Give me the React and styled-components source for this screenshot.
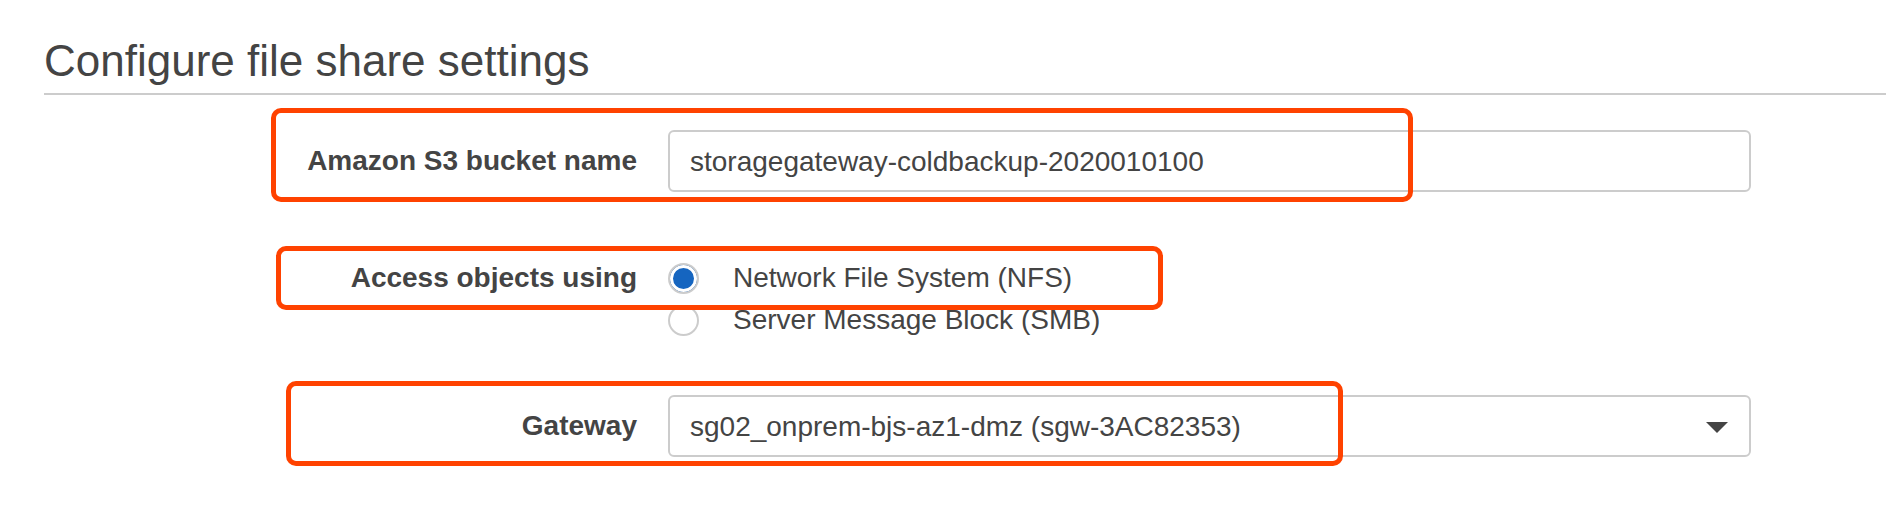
import React from "react";
import styled, { createGlobalStyle } from "styled-components";

const GlobalStyle = createGlobalStyle`
  html, body {
    margin: 0;
    padding: 0;
    background: #ffffff;
  }
  body {
    font-family: "Liberation Sans", Arial, Helvetica, sans-serif;
    color: #444444;
  }
`;

const Page = styled.div`
  padding: 35px 0 40px 44px;
  min-height: 516px;
  box-sizing: border-box;
`;

const Heading = styled.h1`
  margin: 0;
  font-size: 44px;
  font-weight: 400;
  line-height: 52px;
  color: #444444;
  padding-bottom: 6px;
  border-bottom: 2px solid #cccccc;
`;

const Form = styled.div`
  display: flex;
  flex-direction: column;
  margin-top: 35px;
`;

const Row = styled.div`
  position: relative;
  display: grid;
  grid-template-columns: 593px 1083px;
  column-gap: 31px;
  align-items: ${(p) => (p.$top ? "start" : "center")};
  margin-top: ${(p) => p.$gap || 0}px;
`;

const Label = styled.div`
  font-size: 28px;
  font-weight: 700;
  line-height: 42px;
  color: #444444;
  text-align: right;
`;

const TextInput = styled.input`
  box-sizing: border-box;
  width: 100%;
  height: 62px;
  border: 2px solid #cccccc;
  border-radius: 6px;
  padding: 2px 20px 0 20px;
  font-family: "Liberation Sans", Arial, Helvetica, sans-serif;
  font-size: 28px;
  color: #444444;
  background: #ffffff;
  outline: none;
`;

const SelectBox = styled.div`
  box-sizing: border-box;
  height: 62px;
  border: 2px solid #cccccc;
  border-radius: 6px;
  padding: 2px 21px 0 20px;
  display: flex;
  align-items: center;
  justify-content: space-between;
  font-size: 28px;
  color: #444444;
  background: #ffffff;
`;

const RadioGroup = styled.div`
  display: flex;
  flex-direction: column;
`;

const RadioOption = styled.label`
  display: flex;
  align-items: center;
  height: 42px;
  font-size: 28px;
  color: #444444;
`;

const RadioDot = styled.span`
  box-sizing: border-box;
  width: 31px;
  height: 31px;
  border-radius: 50%;
  border: 2px solid #cccccc;
  background: ${(p) => (p.$checked ? "#1565c0" : "#ffffff")};
  box-shadow: inset 0 0 0 3px #ffffff;
  margin-right: 34px;
  flex: none;
`;

const Highlight = styled.div`
  position: absolute;
  box-sizing: border-box;
  border: 5px solid #ff4200;
  border-radius: 10px;
  pointer-events: none;
`;

const Caret = () => (
  <svg width="22" height="11" viewBox="0 0 22 11" aria-hidden="true">
    <path d="M0 0 H22 L11 11 Z" fill="#444444" />
  </svg>
);

export default function App() {
  return (
    <>
      <GlobalStyle />
      <Page>
        <Heading>Configure file share settings</Heading>
        <Form>
          <Row>
            <Label>Amazon S3 bucket name</Label>
            <TextInput readOnly value="storagegateway-coldbackup-2020010100" />
            <Highlight style={{ left: 227, top: -22, width: 1142, height: 94 }} />
          </Row>
          <Row $top $gap={65}>
            <Label>Access objects using</Label>
            <RadioGroup>
              <RadioOption>
                <RadioDot $checked />
                Network File System (NFS)
              </RadioOption>
              <RadioOption>
                <RadioDot />
                Server Message Block (SMB)
              </RadioOption>
            </RadioGroup>
            <Highlight style={{ left: 232, top: -11, width: 887, height: 64 }} />
          </Row>
          <Row $gap={54}>
            <Label>Gateway</Label>
            <SelectBox>
              <span>sg02_onprem-bjs-az1-dmz (sgw-3AC82353)</span>
              <Caret />
            </SelectBox>
            <Highlight style={{ left: 242, top: -14, width: 1057, height: 85 }} />
          </Row>
        </Form>
      </Page>
    </>
  );
}
